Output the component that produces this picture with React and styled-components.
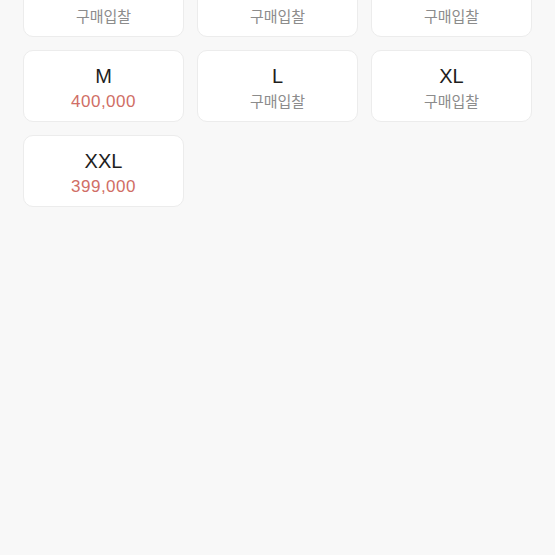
import React from "react";
import styled, { createGlobalStyle } from "styled-components";

const GlobalStyle = createGlobalStyle`
  html, body {
    margin: 0;
    padding: 0;
    background: #f8f8f8;
    overflow: hidden;
  }
  body {
    font-family: "Liberation Sans", "Noto Sans CJK KR", sans-serif;
  }
`;

const Page = styled.div`
  width: 555px;
  height: 555px;
  overflow: hidden;
  background: #f8f8f8;
`;

const Grid = styled.div`
  display: grid;
  grid-template-columns: repeat(3, 1fr);
  gap: 13px;
  padding: 0 23px;
  margin-top: -35px;
`;

const Card = styled.div`
  box-sizing: border-box;
  height: 72px;
  padding-top: 15px;
  background: #fff;
  border: 1px solid #ececec;
  border-radius: 10px;
  display: flex;
  flex-direction: column;
  align-items: center;
  cursor: pointer;
`;

const Size = styled.div`
  font-size: 20px;
  line-height: 20px;
  color: #1e1e1e;
`;

const Price = styled.div`
  margin-top: 6px;
  line-height: 20px;
  color: ${(p) => (p.$bid ? "#d06e66" : "#8c8c8c")};
  font-size: ${(p) => (p.$bid ? "17px" : "15px")};
  letter-spacing: ${(p) => (p.$bid ? "0.5px" : "0")};
`;

const sizes = [
  { size: "XS", price: null },
  { size: "S", price: null },
  { size: "모든 사이즈", price: null },
  { size: "M", price: "400,000" },
  { size: "L", price: null },
  { size: "XL", price: null },
  { size: "XXL", price: "399,000" },
];

const App = () => {
  return (
    <Page>
      <GlobalStyle />
      <Grid>
        {sizes.map((item, index) => (
          <Card key={index}>
            <Size>{item.size}</Size>
            <Price $bid={!!item.price}>{item.price || "구매입찰"}</Price>
          </Card>
        ))}
      </Grid>
    </Page>
  );
};

export default App;
